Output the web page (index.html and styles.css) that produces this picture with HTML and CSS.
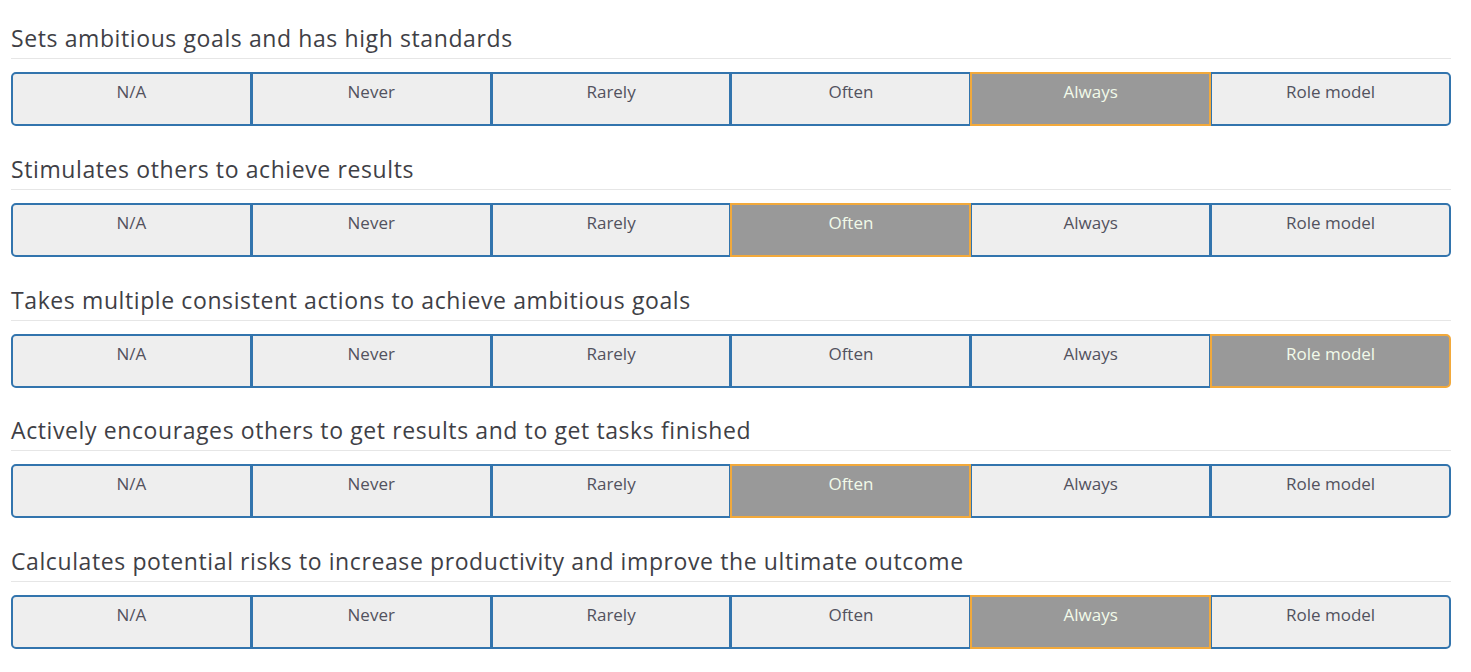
FILE: index.html
```html
<!DOCTYPE html>
<html>
<head>
<meta charset="utf-8">
<link rel="stylesheet" href="styles.css">
</head>
<body>
<div class="survey">
  <div class="question">
    <div class="q-title">Sets ambitious goals and has high standards</div>
    <div class="scale">
      <div class="opt">N/A</div><div class="opt">Never</div><div class="opt">Rarely</div><div class="opt">Often</div><div class="opt sel">Always</div><div class="opt">Role model</div>
    </div>
  </div>
  <div class="question">
    <div class="q-title">Stimulates others to achieve results</div>
    <div class="scale">
      <div class="opt">N/A</div><div class="opt">Never</div><div class="opt">Rarely</div><div class="opt sel">Often</div><div class="opt">Always</div><div class="opt">Role model</div>
    </div>
  </div>
  <div class="question">
    <div class="q-title">Takes multiple consistent actions to achieve ambitious goals</div>
    <div class="scale">
      <div class="opt">N/A</div><div class="opt">Never</div><div class="opt">Rarely</div><div class="opt">Often</div><div class="opt">Always</div><div class="opt sel">Role model</div>
    </div>
  </div>
  <div class="question">
    <div class="q-title">Actively encourages others to get results and to get tasks finished</div>
    <div class="scale">
      <div class="opt">N/A</div><div class="opt">Never</div><div class="opt">Rarely</div><div class="opt sel">Often</div><div class="opt">Always</div><div class="opt">Role model</div>
    </div>
  </div>
  <div class="question">
    <div class="q-title">Calculates potential risks to increase productivity and improve the ultimate outcome</div>
    <div class="scale">
      <div class="opt">N/A</div><div class="opt">Never</div><div class="opt">Rarely</div><div class="opt">Often</div><div class="opt sel">Always</div><div class="opt">Role model</div>
    </div>
  </div>
</div>
</body>
</html>
```

FILE: styles.css
```css
html, body {
  margin: 0;
  padding: 0;
  background: #ffffff;
}
body {
  font-family: "Open Sans", "DejaVu Sans", sans-serif;
  color: #444;
}
.survey {
  padding: 23px 20px 0 11px;
}
.question {
  margin-bottom: 27.75px;
}
.q-title {
  font-size: 23px;
  letter-spacing: 0.6px;
  line-height: 30px;
  color: #3f3f46;
  padding-bottom: 5px;
  border-bottom: 1px solid #e6e6e6;
  margin-bottom: 13px;
}
.scale {
  display: flex;
  height: 54px;
}
.opt {
  flex: 1 1 0;
  box-sizing: border-box;
  background: #eeeeee;
  border: 2px solid #3274ad;
  margin-left: -1px;
  text-align: center;
  font-size: 17px;
  line-height: 22px;
  padding-top: 7px;
  color: #52525e;
}
.opt:first-child {
  margin-left: 0;
  border-radius: 5px 0 0 5px;
}
.opt:last-child {
  border-radius: 0 5px 5px 0;
}
.opt.sel {
  background: #999999;
  border-color: #f2a93b;
  color: #f2fbea;
  position: relative;
  z-index: 1;
}
```
